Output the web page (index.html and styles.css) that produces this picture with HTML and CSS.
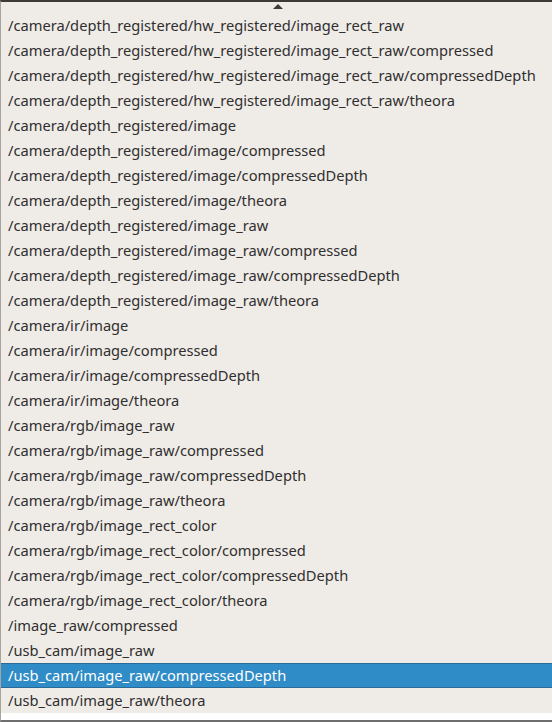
FILE: index.html
```html
<!DOCTYPE html>
<html>
<head>
<meta charset="utf-8">
<link rel="stylesheet" href="styles.css">
</head>
<body>
<div class="popup">
  <div class="scroll-up"><span class="arrow"></span></div>
  <ul class="list">
    <li class="item">/camera/depth_registered/hw_registered/image_rect_raw</li>
    <li class="item">/camera/depth_registered/hw_registered/image_rect_raw/compressed</li>
    <li class="item">/camera/depth_registered/hw_registered/image_rect_raw/compressedDepth</li>
    <li class="item">/camera/depth_registered/hw_registered/image_rect_raw/theora</li>
    <li class="item">/camera/depth_registered/image</li>
    <li class="item">/camera/depth_registered/image/compressed</li>
    <li class="item">/camera/depth_registered/image/compressedDepth</li>
    <li class="item">/camera/depth_registered/image/theora</li>
    <li class="item">/camera/depth_registered/image_raw</li>
    <li class="item">/camera/depth_registered/image_raw/compressed</li>
    <li class="item">/camera/depth_registered/image_raw/compressedDepth</li>
    <li class="item">/camera/depth_registered/image_raw/theora</li>
    <li class="item">/camera/ir/image</li>
    <li class="item">/camera/ir/image/compressed</li>
    <li class="item">/camera/ir/image/compressedDepth</li>
    <li class="item">/camera/ir/image/theora</li>
    <li class="item">/camera/rgb/image_raw</li>
    <li class="item">/camera/rgb/image_raw/compressed</li>
    <li class="item">/camera/rgb/image_raw/compressedDepth</li>
    <li class="item">/camera/rgb/image_raw/theora</li>
    <li class="item">/camera/rgb/image_rect_color</li>
    <li class="item">/camera/rgb/image_rect_color/compressed</li>
    <li class="item">/camera/rgb/image_rect_color/compressedDepth</li>
    <li class="item">/camera/rgb/image_rect_color/theora</li>
    <li class="item">/image_raw/compressed</li>
    <li class="item">/usb_cam/image_raw</li>
    <li class="item selected">/usb_cam/image_raw/compressedDepth</li>
    <li class="item">/usb_cam/image_raw/theora</li>
  </ul>
  <div class="bottom-strip"></div>
</div>
</body>
</html>
```
FILE: styles.css
```css
html, body {
  margin: 0;
  padding: 0;
  background: #efebe7;
}
.popup {
  width: 552px;
  height: 722px;
  box-sizing: border-box;
  border-top: 2px solid #3c3b37;
  border-left: 1px solid #a8a49e;
  border-bottom: 2px solid #6e6e6e;
  background: #efebe7;
  display: flex;
  flex-direction: column;
  font-family: "Noto Sans", "DejaVu Sans", sans-serif;
  font-size: 14.67px;
  color: #2f2f2f;
}
.scroll-up {
  height: 11px;
  display: flex;
  justify-content: center;
  padding-top: 2px;
  box-sizing: border-box;
}
.arrow {
  width: 0;
  height: 0;
  border-left: 5px solid transparent;
  border-right: 5px solid transparent;
  border-bottom: 5px solid #3c3b37;
  margin-left: 2px;
}
.list {
  list-style: none;
  margin: 0;
  padding: 0;
}
.item {
  height: 25px;
  line-height: 25px;
  padding-left: 7px;
  box-sizing: border-box;
  white-space: nowrap;
}
.item.selected {
  background: #308cc6;
  color: #ffffff;
  border-top: 1px solid #2a6a98;
  border-bottom: 1px solid #2a6a98;
  line-height: 23px;
}
.bottom-strip {
  flex: 1;
  background: #ffffff;
}
```
